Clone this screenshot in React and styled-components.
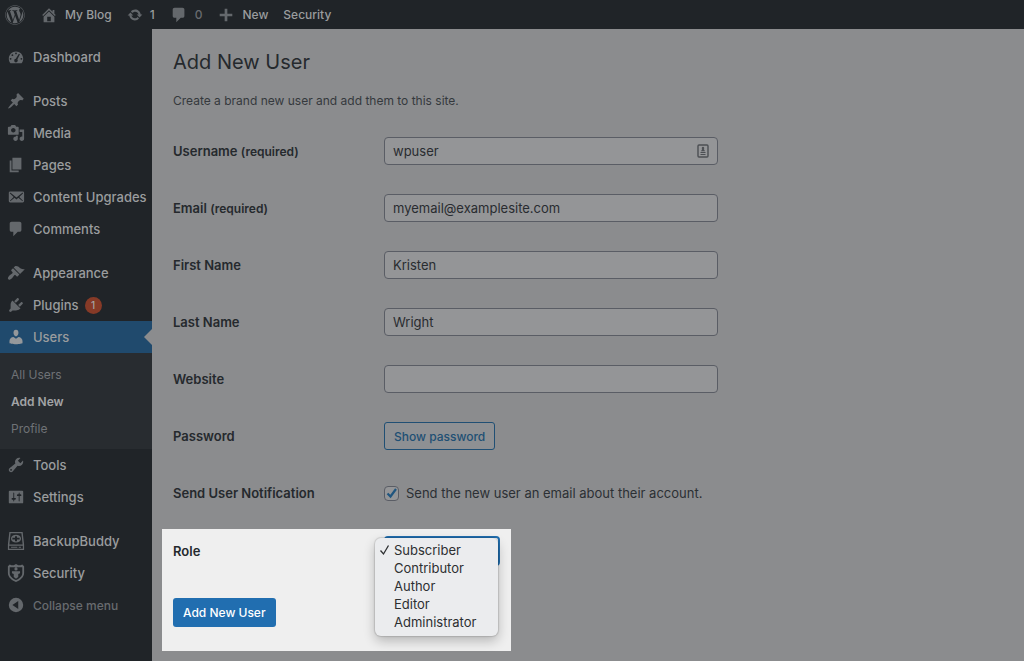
import React, { useState } from 'react';
import styled, { createGlobalStyle } from 'styled-components';
import { FaWordpress } from 'react-icons/fa';

const GlobalStyle = createGlobalStyle`
  * {
    box-sizing: border-box;
  }

  body {
    margin: 0;
    background: #8b8c8e;
    color: #25292d;
    font-family: Inter, Roboto, sans-serif;
    font-size: 13px;
  }

  a {
    color: inherit;
    text-decoration: none;
  }

  button,
  input,
  select {
    font-family: inherit;
  }
`;

const Page = styled.div`
  display: flex;
  flex-direction: column;
  min-height: 100vh;
`;

const Toolbar = styled.header`
  display: flex;
  align-items: center;
  gap: 15px;
  height: 29px;
  padding: 0 5px;
  background: #202428;
  color: #9a9c9e;
`;

const ToolbarLink = styled.a`
  display: flex;
  align-items: center;
  gap: 7px;
  font-size: 12px;
  font-weight: 500;
  line-height: 20px;

  svg {
    color: #64686c;
  }

  span {
    color: ${(props) => (props.$muted ? '#686b6f' : 'inherit')};
  }
`;

const Body = styled.div`
  display: flex;
  flex: 1;
`;

const Sidebar = styled.nav`
  flex: 0 0 152px;
  padding-top: 12px;
  background: #202428;
`;

const MenuGroup = styled.ul`
  margin: 0 0 12px;
  padding: 0;
  list-style: none;
`;

const MenuLink = styled.a`
  position: relative;
  display: flex;
  align-items: center;
  gap: 8px;
  height: 32px;
  padding-left: 7px;
  background: ${(props) => (props.$active ? '#204a6d' : 'transparent')};
  color: ${(props) => (props.$muted ? '#686b6f' : '#9a9c9e')};
  font-size: ${(props) => (props.$muted ? '12px' : '13px')};
  font-weight: 500;
  white-space: nowrap;

  svg {
    flex: none;
    color: ${(props) => (props.$active ? '#95989b' : '#64686c')};
  }

  &::after {
    content: '';
    display: ${(props) => (props.$active ? 'block' : 'none')};
    position: absolute;
    top: 8px;
    right: 0;
    border: 8px solid transparent;
    border-left: 0;
    border-right-color: #8b8c8e;
  }
`;

const Badge = styled.span`
  width: 17px;
  height: 17px;
  margin-left: -2px;
  border-radius: 9px;
  background: #863a27;
  color: #a5a5a5;
  font-size: 10px;
  line-height: 17px;
  text-align: center;
`;

const SubMenu = styled.ul`
  margin: 0;
  padding: 8px 0 7px;
  background: #282c30;
  list-style: none;

  a {
    display: block;
    padding-left: 11px;
    color: #6f7276;
    font-size: 12px;
    line-height: 27px;
  }

  a[aria-current] {
    color: #a2a4a6;
    font-weight: 600;
  }
`;

const Content = styled.main`
  flex: 1;
  padding: 20px 21px 0;
`;

const Title = styled.h1`
  margin: 0;
  font-size: 20px;
  font-weight: 400;
  line-height: 26px;
`;

const Intro = styled.p`
  margin: 16px 0 26px;
  color: #35393d;
  font-size: 12px;
  line-height: 20px;
`;

const Row = styled.div`
  display: grid;
  grid-template-columns: 211px minmax(0, 334px);
  align-items: center;
  height: 28px;
  margin-bottom: 29px;
`;

const Label = styled.label`
  font-size: 13px;
  font-weight: 600;

  small {
    font-size: 12px;
  }
`;

const Field = styled.div`
  position: relative;
  display: flex;
  align-items: center;
`;

const TextInput = styled.input`
  width: 100%;
  height: 28px;
  padding: 0 8px;
  border: 1px solid #5a5d65;
  border-radius: 4px;
  background: #949597;
  color: #292c30;
  font-size: 13px;
  outline: none;
`;

const FieldIcon = styled.svg`
  position: absolute;
  right: 9px;
  color: #4c4f53;
`;

const OutlineButton = styled.button`
  height: 28px;
  padding: 0 9px;
  border: 1px solid #204f74;
  border-radius: 3px;
  background: #8e9093;
  color: #204f74;
  font-size: 12px;
  font-weight: 500;
`;

const CheckLabel = styled.label`
  position: relative;
  display: flex;
  align-items: center;
  gap: 7px;
  color: #2c3034;
  font-size: 13px;
  white-space: nowrap;

  input {
    appearance: none;
    width: 15px;
    height: 15px;
    margin: 0;
    border: 1px solid #5a5d65;
    border-radius: 4px;
    background: #949597;
  }

  svg {
    position: absolute;
    left: 1px;
    color: #1f557f;
    pointer-events: none;
  }

  input:not(:checked) + svg {
    display: none;
  }
`;

const Spotlight = styled.section`
  width: fit-content;
  margin: -7px 0 0 -11px;
  padding: 7px 11px 24px;
  background: #efefef;
`;

const RoleRow = styled.div`
  display: grid;
  grid-template-columns: 211px 116px;
  align-items: center;
  height: 28px;
  margin-bottom: 34px;
`;

const RoleSelect = styled.select`
  width: 100%;
  height: 30px;
  border: 2px solid #216eae;
  border-radius: 4px;
  background: #f7f7f7;
  color: transparent;
  appearance: none;
  outline: none;
`;

const Options = styled.ul`
  position: absolute;
  top: 2px;
  left: -9px;
  width: 123px;
  margin: 0;
  padding: 3px 0 5px;
  border-radius: 6px;
  background: #ebecee;
  box-shadow: 0 0 1px 1px rgba(0, 0, 0, 0.12), 0 5px 12px rgba(0, 0, 0, 0.24);
  list-style: none;
`;

const Option = styled.li`
  display: grid;
  grid-template-columns: 11px 1fr;
  align-items: center;
  gap: 4px;
  padding-left: 4px;
  color: #2d2f31;
  font-size: 13px;
  line-height: 18px;
  cursor: default;

  span {
    grid-column: 2;
  }
`;

const PrimaryButton = styled.button`
  height: 29px;
  padding: 0 10px;
  border: 0;
  border-radius: 3px;
  background: #216eb0;
  color: #fff;
  font-size: 12px;
  font-weight: 500;
`;

const paths = {
  home: 'M16 8.5l1.53 1.53-1.06 1.06L10 4.6l-6.47 6.49-1.06-1.06L10 2.5l4 4v-2h2v4zm-6-2.46l6 5.99V18H4v-5.97zM12 17v-5H8v5h4z',
  update:
    'M10.2 3.28c3.53 0 6.43 2.61 6.92 6h2.08l-3.5 4-3.5-4h2.32c-.45-1.97-2.21-3.45-4.32-3.45-1.45 0-2.73.71-3.54 1.78L4.95 5.66C6.23 4.2 8.11 3.28 10.2 3.28zm-.4 13.44c-3.52 0-6.43-2.61-6.92-6H.8l3.5-4c1.17 1.33 2.33 2.67 3.5 4H5.48c.45 1.97 2.21 3.45 4.32 3.45 1.45 0 2.73-.71 3.54-1.78l1.71 1.95c-1.28 1.46-3.15 2.38-5.25 2.38z',
  plus: 'M17 8.5v3h-5.5V17h-3v-5.5H3v-3h5.5V3h3v5.5z',
  dashboard:
    'M3.76 17h12.48c1.1-1.37 1.76-3.11 1.76-5 0-4.42-3.58-8-8-8s-8 3.58-8 8c0 1.89.66 3.63 1.76 5zM9 6a1 1 0 1 1 2 0a1 1 0 1 1-2 0zM5 8a1 1 0 1 1 2 0a1 1 0 1 1-2 0zM3 12a1 1 0 1 1 2 0a1 1 0 1 1-2 0zM15 12a1 1 0 1 1 2 0a1 1 0 1 1-2 0zM14.2 7.3l-2.7 5.4c.3.4.5.8.5 1.3a2 2 0 1 1-2.2-2l3.2-5.2c.7-.6 1.6-.1 1.2.5z',
  posts:
    'M10.44 3.02l1.82-1.82 6.36 6.35-1.83 1.82c-1.05-.68-2.48-.57-3.41.36l-.75.75c-.92.93-1.04 2.35-.35 3.41l-1.83 1.82-2.41-2.41-2.8 2.79c-.42.42-3.38 2.71-3.8 2.29s1.86-3.39 2.28-3.81l2.79-2.79L4.1 9.36l1.83-1.82c1.05.69 2.48.57 3.4-.36l.75-.75c.93-.92 1.05-2.35.36-3.41z',
  media:
    'M13 11V4c0-.55-.45-1-1-1h-1.67L9 1H5L3.67 3H2c-.55 0-1 .45-1 1v7c0 .55.45 1 1 1h10c.55 0 1-.45 1-1zM7 4.5c1.38 0 2.5 1.12 2.5 2.5S8.38 9.5 7 9.5 4.5 8.38 4.5 7 5.62 4.5 7 4.5zM14 6h5v10.5c0 1.38-1.12 2.5-2.5 2.5S14 17.88 14 16.5s1.12-2.5 2.5-2.5c.17 0 .34.02.5.05V9h-3V6zm-4 8.05V13h2v3.5c0 1.38-1.12 2.5-2.5 2.5S7 17.88 7 16.5 8.12 14 9.5 14c.17 0 .34.02.5.05z',
  pages: 'M6 15V2h10v13H6zm-1 1h8v2H3V5h2v11z',
  mail: 'M19 14.5v-9c0-.83-.67-1.5-1.5-1.5H3.49c-.83 0-1.5.67-1.5 1.5v9c0 .83.67 1.5 1.5 1.5H17.5c.83 0 1.5-.67 1.5-1.5zm-1.31-9.11c.33.33.15.67-.03.84L13.6 9.95l3.9 4.06c.12.14.2.36.06.51-.13.16-.43.15-.56.05l-4.37-3.73-2.14 1.95-2.13-1.95-4.37 3.73c-.13.1-.43.11-.56-.05-.14-.15-.06-.37.06-.51l3.9-4.06-4.06-3.72c-.18-.17-.36-.51-.03-.84s.67-.17.95.07l6.24 5.04 6.25-5.04c.28-.24.62-.4.95-.07z',
  comments:
    'M5 2h9c1.1 0 2 .9 2 2v7c0 1.1-.9 2-2 2h-2l-5 5v-5H5c-1.1 0-2-.9-2-2V4c0-1.1.9-2 2-2z',
  appearance:
    'M14.48 11.06L7.41 3.99l1.5-1.5c.5-.56 2.3-.47 3.51.32 1.21.8 1.43 1.28 2.91 2.1 1.18.64 2.45 1.26 4.45.85zm-.71.71L6.7 4.7 4.93 6.47c-.39.39-.39 1.02 0 1.41l1.06 1.06c.39.39.39 1.03 0 1.42-.6.6-1.43 1.11-2.21 1.69-.35.26-.7.53-1.01.84C1.43 14.23.4 16.08 1.4 17.07c.99 1 2.84-.03 4.18-1.36.31-.31.58-.66.85-1.02.57-.78 1.08-1.61 1.69-2.21.39-.39 1.02-.39 1.41 0l1.06 1.06c.39.39 1.02.39 1.41 0z',
  plugins:
    'M13.11 4.36L9.87 7.6 8 5.73l3.24-3.24c.35-.34 1.05-.2 1.56.32.52.51.66 1.21.31 1.55zm-8 1.77l.91-1.12 9.01 9.01-1.19.84c-.71.71-2.63 1.16-3.82 1.16H6.14L4.9 17.26c-.59.59-1.54.59-2.12 0-.59-.58-.59-1.53 0-2.12l1.24-1.24v-3.88c0-1.13.4-3.19 1.09-3.89zm7.26 3.97l3.24-3.24c.34-.35 1.04-.21 1.55.31.52.51.66 1.21.31 1.55l-3.24 3.25z',
  users:
    'M10 9.25c-2.27 0-2.73-3.44-2.73-3.44C7 4.02 7.82 2 9.97 2c2.16 0 2.98 2.02 2.71 3.81 0 0-.41 3.44-2.68 3.44zm0 2.57L12.72 10c2.39 0 4.52 2.33 4.52 4.53v2.49s-3.65 1.13-7.24 1.13c-3.65 0-7.24-1.13-7.24-1.13v-2.49c0-2.25 1.94-4.48 4.47-4.48z',
  tools:
    'M16.68 9.77c-1.34 1.34-3.3 1.67-4.95.99l-5.41 6.52c-.99.99-2.59.99-3.58 0s-.99-2.59 0-3.57l6.52-5.42c-.68-1.65-.35-3.61.99-4.95 1.28-1.28 3.12-1.62 4.72-1.06l-2.89 2.89 2.82 2.82 2.86-2.87c.53 1.58.18 3.39-1.08 4.65zM3.81 16.21c.4.39 1.04.39 1.43 0 .4-.4.4-1.04 0-1.43-.39-.4-1.03-.4-1.43 0-.39.39-.39 1.03 0 1.43z',
  settings:
    'M18 16V4c0-.55-.45-1-1-1H3c-.55 0-1 .45-1 1v12c0 .55.45 1 1 1h14c.55 0 1-.45 1-1zM8 11h1c.55 0 1 .45 1 1s-.45 1-1 1H8v1.5c0 .28-.22.5-.5.5s-.5-.22-.5-.5V13H6c-.55 0-1-.45-1-1s.45-1 1-1h1V5.5c0-.28.22-.5.5-.5s.5.22.5.5V11zm5-2h-1c-.55 0-1-.45-1-1s.45-1 1-1h1V5.5c0-.28.22-.5.5-.5s.5.22.5.5V7h1c.55 0 1 .45 1 1s-.45 1-1 1h-1v5.5c0 .28-.22.5-.5.5s-.5-.22-.5-.5V9z',
  backup:
    'M2.6 0h14.8L19 14v6H1v-6zM4 1.4L2.6 13.8h14.8L16 1.4zM2.4 15.2v3.4h15.2v-3.4zM4.5 16.4h7v1h-7zM13 16.4h2.500v1H13zM10 3a5.600 4.400 0 1 1 0 8.800a5.600 4.400 0 1 1 0-8.800zM8.900 4.600v1.800H6v2h2.900v1.800h2.200V8.400H14v-2h-2.900V4.600z',
  security:
    'M1 2.5l2-2 2 1h2.5L10 0l2.5 1.5H15l2-1 2 2V10c0 4.5-4 8-9 10c-5-2-9-5.500-9-10zM3 3.500V10c0 3.500 3 6 7 7.800c4-1.800 7-4.300 7-7.800V3.500zM8.200 5.500a1.800 1.800 0 1 1 3.600 0a1.800 1.800 0 1 1-3.600 0zM5.500 8h9v2.200L12.500 11v3.500L10 16.500 7.500 14.500V11l-2-.800z',
  collapse: 'M10 2a8 8 0 1 1 0 16a8 8 0 1 1 0-16zM12.500 5.500L6 10l6.500 4.500z',
};

const Icon = ({ name, size = 18 }) => (
  <svg width={size} height={size} viewBox="0 0 20 20" fill="currentColor" fillRule="evenodd" aria-hidden="true">
    <path d={paths[name]} />
  </svg>
);

const menu = [
  [{ icon: 'dashboard', text: 'Dashboard' }],
  [
    { icon: 'posts', text: 'Posts' },
    { icon: 'media', text: 'Media' },
    { icon: 'pages', text: 'Pages' },
    { icon: 'mail', text: 'Content Upgrades' },
    { icon: 'comments', text: 'Comments' },
  ],
  [
    { icon: 'appearance', text: 'Appearance' },
    { icon: 'plugins', text: 'Plugins', count: 1 },
    { icon: 'users', text: 'Users', children: ['All Users', 'Add New', 'Profile'] },
    { icon: 'tools', text: 'Tools' },
    { icon: 'settings', text: 'Settings' },
  ],
  [
    { icon: 'backup', text: 'BackupBuddy' },
    { icon: 'security', text: 'Security' },
    { icon: 'collapse', text: 'Collapse menu', muted: true },
  ],
];

const fields = [
  { id: 'username', label: 'Username', required: true, value: 'wpuser' },
  { id: 'email', label: 'Email', required: true, value: 'myemail@examplesite.com' },
  { id: 'first-name', label: 'First Name', value: 'Kristen' },
  { id: 'last-name', label: 'Last Name', value: 'Wright' },
  { id: 'website', label: 'Website', value: '' },
];

const roles = ['Subscriber', 'Contributor', 'Author', 'Editor', 'Administrator'];

const SideMenu = () => (
  <Sidebar>
    {menu.map((group) => (
      <MenuGroup key={group[0].text}>
        {group.map((item) => (
          <li key={item.text}>
            <MenuLink href="#" $active={!!item.children} $muted={item.muted}>
              <Icon name={item.icon} />
              {item.text}
              {item.count && <Badge>{item.count}</Badge>}
            </MenuLink>
            {item.children && (
              <SubMenu>
                {item.children.map((child) => (
                  <li key={child}>
                    <a href="#" aria-current={child === 'Add New' ? 'page' : undefined}>
                      {child}
                    </a>
                  </li>
                ))}
              </SubMenu>
            )}
          </li>
        ))}
      </MenuGroup>
    ))}
  </Sidebar>
);

const App = () => {
  const [role, setRole] = useState('Subscriber');

  return (
    <Page>
      <GlobalStyle />
      <Toolbar>
        <ToolbarLink href="#" aria-label="WordPress">
          <FaWordpress size={20} />
        </ToolbarLink>
        <ToolbarLink href="#">
          <Icon name="home" />
          <span>My Blog</span>
        </ToolbarLink>
        <ToolbarLink href="#">
          <Icon name="update" size={16} />
          <span>1</span>
        </ToolbarLink>
        <ToolbarLink href="#" $muted>
          <Icon name="comments" />
          <span>0</span>
        </ToolbarLink>
        <ToolbarLink href="#">
          <Icon name="plus" />
          <span>New</span>
        </ToolbarLink>
        <ToolbarLink href="#">
          <span>Security</span>
        </ToolbarLink>
      </Toolbar>
      <Body>
        <SideMenu />
        <Content>
          <Title>Add New User</Title>
          <Intro>Create a brand new user and add them to this site.</Intro>
          <form onSubmit={(e) => e.preventDefault()}>
            {fields.map((field) => (
              <Row key={field.id}>
                <Label htmlFor={field.id}>
                  {field.label} {field.required && <small>(required)</small>}
                </Label>
                <Field>
                  <TextInput id={field.id} defaultValue={field.value} />
                  {field.id === 'username' && (
                    <FieldIcon width="12" height="14" viewBox="0 0 12 14" fill="none" stroke="currentColor">
                      <rect x="1" y="1" width="10" height="12" rx="1" strokeWidth="1.4" />
                      <path d="M3.500 8.500h5M3.500 10.500h5" />
                      <path d="M6 2.800a1.300 1.300 0 0 1 .8 2.300L8 7.200H4l1.200-2.100A1.300 1.300 0 0 1 6 2.800z" fill="currentColor" stroke="none" />
                    </FieldIcon>
                  )}
                </Field>
              </Row>
            ))}
            <Row>
              <Label htmlFor="password">Password</Label>
              <Field>
                <OutlineButton id="password" type="button">
                  Show password
                </OutlineButton>
              </Field>
            </Row>
            <Row>
              <Label htmlFor="notify">Send User Notification</Label>
              <CheckLabel>
                <input id="notify" type="checkbox" defaultChecked />
                <svg width="14" height="14" viewBox="0 0 14 14" fill="none" stroke="currentColor" strokeWidth="2.200">
                  <path d="M2.500 7.500l3 3L11 3" />
                </svg>
                Send the new user an email about their account.
              </CheckLabel>
            </Row>
            <Spotlight>
              <RoleRow>
                <Label htmlFor="role">Role</Label>
                <Field>
                  <RoleSelect id="role" value={role} onChange={(e) => setRole(e.target.value)}>
                    {roles.map((name) => (
                      <option key={name}>{name}</option>
                    ))}
                  </RoleSelect>
                  <Options role="listbox" aria-label="Role">
                    {roles.map((name) => (
                      <Option key={name} role="option" aria-selected={name === role} onClick={() => setRole(name)}>
                        {name === role && (
                          <svg width="11" height="12" viewBox="0 0 11 12" fill="none" stroke="currentColor" strokeWidth="1.300">
                            <path d="M1.500 6.500l3 3.500 5-8.500" />
                          </svg>
                        )}
                        <span>{name}</span>
                      </Option>
                    ))}
                  </Options>
                </Field>
              </RoleRow>
              <PrimaryButton type="submit">Add New User</PrimaryButton>
            </Spotlight>
          </form>
        </Content>
      </Body>
    </Page>
  );
};

export default App;
